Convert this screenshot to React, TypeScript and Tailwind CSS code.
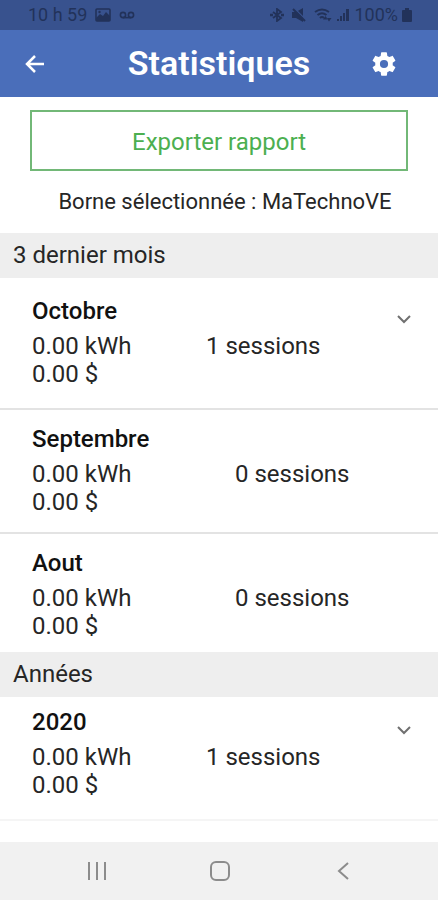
import React from 'react';

interface Period {
  name: string;
  energy: string;
  cost: string;
  sessions: number;
  expandable: boolean;
}

const months: Period[] = [
  { name: 'Octobre', energy: '0.00 kWh', cost: '0.00 $', sessions: 1, expandable: true },
  { name: 'Septembre', energy: '0.00 kWh', cost: '0.00 $', sessions: 0, expandable: false },
  { name: 'Aout', energy: '0.00 kWh', cost: '0.00 $', sessions: 0, expandable: false },
];

const years: Period[] = [
  { name: '2020', energy: '0.00 kWh', cost: '0.00 $', sessions: 1, expandable: true },
];

const StatusBar: React.FC = () => (
  <div className="flex h-[30px] items-center justify-between bg-[#38528e] pr-[26px] pl-7 text-lg text-[#22325a]">
    <div className="flex items-center gap-2">
      <span>10 h 59</span>
      <svg className="h-[14px] w-4" viewBox="0 0 16 14" fill="none" stroke="currentColor" strokeWidth="1.6">
        <rect x="1" y="1" width="14" height="12" rx="1" />
        <path d="M1 10l4-4 3 2 3-4 4 4v5H1z" fill="currentColor" stroke="none" />
        <circle cx="4.500" cy="4" r="1.200" fill="currentColor" stroke="none" />
      </svg>
      <svg className="h-2 w-4" viewBox="0 0 16 8" fill="none" stroke="currentColor" strokeWidth="1.6">
        <circle cx="4" cy="4" r="2.6" />
        <circle cx="12" cy="4" r="2.6" />
        <path d="M4 6.6h8" />
      </svg>
    </div>
    <div className="flex items-center gap-1">
      <svg className="h-[14px] w-[14px]" viewBox="0 0 14 14" fill="none" stroke="currentColor" strokeWidth="1.800">
        <path d="M3 4l8 6-4 3V1l4 3-8 6" />
        <path d="M0 7h3M11 7h3" strokeWidth="2.400" />
      </svg>
      <svg className="mx-1 h-[14px] w-[14px]" viewBox="0 0 14 14">
        <path d="M0 4h4l7-4v14l-7-4H0z" fill="currentColor" />
        <path d="M2 0l12 12" stroke="#38528e" strokeWidth="1.500" />
        <path d="M1 1l12 12" stroke="currentColor" strokeWidth="2" />
      </svg>
      <svg className="h-4 w-[18px]" viewBox="0 0 18 16" fill="none" stroke="currentColor" strokeWidth="2">
        <path d="M1 5q7-5 14 0M3.500 8q4.500-3.500 9 0M6 11q2-2 4 0" />
        <path d="M9 12.500l2.500-3.500 2.500 3.500zM12.500 11l2.500 3.500 2.500-3.500z" fill="currentColor" stroke="none" />
      </svg>
      <svg className="h-[14px] w-[14px]" viewBox="0 0 14 14" fill="currentColor">
        <path d="M1 13h2v-2H1zM4 13h2V8H4zM7 13h2V5H7zM10 13h3V1h-3z" />
      </svg>
      <span>100%</span>
      <svg className="h-[14px] w-[10px]" viewBox="0 0 10 14" fill="currentColor">
        <path d="M3 0h4v2h2q1 0 1 1v10q0 1-1 1H1q-1 0-1-1V3q0-1 1-1h2z" />
      </svg>
    </div>
  </div>
);

const Header: React.FC = () => (
  <header className="grid h-[67px] grid-cols-[1fr_auto_1fr] items-center bg-[#4a6eba] px-6 text-white">
    <button aria-label="Retour" className="justify-self-start">
      <svg className="h-[22px] w-[22px]" viewBox="0 0 22 22" fill="none" stroke="currentColor" strokeWidth="2.500">
        <path d="M20 11H3M11 3l-8 8 8 8" />
      </svg>
    </button>
    <h1 className="text-[34px] font-semibold">Statistiques</h1>
    <button aria-label="Paramètres" className="mr-4 justify-self-end">
      <svg className="h-7 w-7" viewBox="0 0 24 24" fill="currentColor">
        <path d="M19.430 12.980c.040-.320.070-.640.070-.980s-.030-.660-.070-.980l2.110-1.650c.190-.150.240-.420.120-.640l-2-3.460c-.120-.220-.390-.300-.610-.220l-2.490 1c-.520-.400-1.080-.730-1.690-.980l-.380-2.650A.49.49 0 0 0 14 2h-4c-.250 0-.460.180-.490.420l-.380 2.650c-.610.250-1.170.590-1.690.980l-2.490-1c-.230-.090-.490 0-.610.220l-2 3.460c-.130.220-.070.490.120.640l2.110 1.650c-.040.320-.070.650-.070.980s.030.660.070.980l-2.110 1.650c-.190.150-.240.420-.120.640l2 3.460c.120.220.390.300.610.220l2.490-1c.520.400 1.080.730 1.690.980l.380 2.650c.030.240.240.420.490.420h4c.250 0 .460-.180.490-.420l.380-2.650c.610-.250 1.170-.590 1.690-.980l2.490 1c.230.090.490 0 .610-.220l2-3.460c.120-.220.070-.490-.120-.640zM12 15.500a3.500 3.500 0 1 1 0-7 3.500 3.500 0 0 1 0 7z" />
      </svg>
    </button>
  </header>
);

const PeriodRow: React.FC<{ period: Period }> = ({ period }) => (
  <li
    className={`flex gap-4 pl-8 ${
      period.expandable
        ? 'border-b-2 border-[#e3e3e3] pt-2 pr-[26px] pb-5 last:border-[#f5f5f5]'
        : 'border-b-2 border-[#e3e3e3] pt-3 pb-4 last:border-b-0 last:pb-3'
    }`}
  >
    <div className="flex-1">
      <h3 className="leading-[34px] font-medium text-[#111111]">{period.name}</h3>
      <div className="grid grid-cols-2 pt-1 leading-7">
        <div>
          <p>{period.energy}</p>
          <p>{period.cost}</p>
        </div>
        <p>{period.sessions} sessions</p>
      </div>
    </div>
    {period.expandable && (
      <button aria-label={`Détails ${period.name}`} className="self-start pt-[18px]">
        <svg className="h-4 w-4" viewBox="0 0 16 16" fill="none" stroke="#707070" strokeWidth="2">
          <path d="M2 4l6 6 6-6" />
        </svg>
      </button>
    )}
  </li>
);

const Section: React.FC<{ title: string; children: React.ReactNode }> = ({ title, children }) => (
  <section>
    <h2 className="bg-[#eeeeee] px-[13px] leading-[45px]">{title}</h2>
    {children}
  </section>
);

const NavigationBar: React.FC = () => (
  <nav className="grid h-[58px] grid-cols-3 items-center justify-items-center bg-[#f1f1f1] pr-[34px] pl-9 text-[#8c8c8c]">
    <button aria-label="Applications récentes">
      <svg className="h-5 w-5" viewBox="0 0 20 20" stroke="currentColor" strokeWidth="2">
        <path d="M2 1v18M10 1v18M18 1v18" />
      </svg>
    </button>
    <button aria-label="Accueil">
      <svg className="h-5 w-5" viewBox="0 0 20 20" fill="none" stroke="currentColor" strokeWidth="2">
        <rect x="1" y="1" width="18" height="18" rx="5" />
      </svg>
    </button>
    <button aria-label="Précédent">
      <svg className="h-5 w-5" viewBox="0 0 20 20" fill="none" stroke="currentColor" strokeWidth="2">
        <path d="M15 2l-9 8 9 8" />
      </svg>
    </button>
  </nav>
);

const App: React.FC = () => (
  <div className="flex min-h-screen flex-col bg-white font-['Roboto',sans-serif] text-2xl text-[#262626]">
    <StatusBar />
    <Header />
    <main className="flex-1">
      <div className="px-[30px] pt-[13px]">
        <button className="h-[61px] w-full border-2 border-[#72b877] pt-[2px] text-[#4caf50]">Exporter rapport</button>
      </div>
      <p className="py-4 pl-3 text-center text-[22px] leading-[30px]">Borne sélectionnée : MaTechnoVE</p>
      <Section title="3 dernier mois">
        <ul className="pt-2">
          {months.map((period) => (
            <PeriodRow key={period.name} period={period} />
          ))}
        </ul>
      </Section>
      <Section title="Années">
        <ul>
          {years.map((period) => (
            <PeriodRow key={period.name} period={period} />
          ))}
        </ul>
      </Section>
    </main>
    <NavigationBar />
  </div>
);

export default App;
